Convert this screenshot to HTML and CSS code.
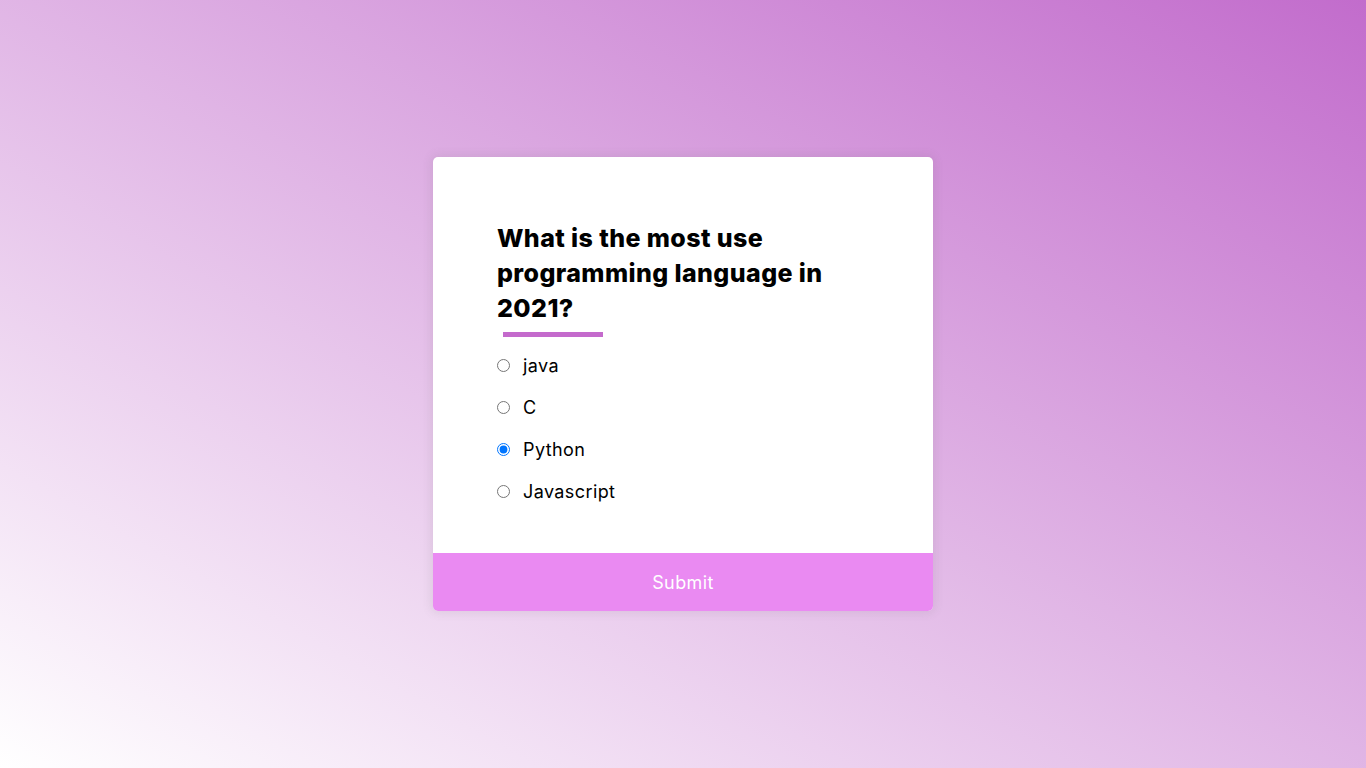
FILE: index.html
```html
<!DOCTYPE html>
<html lang="en">
<head>
<meta charset="UTF-8">
<title>Quiz</title>
<link rel="stylesheet" href="styles.css">
</head>
<body>
<main class="page">
  <div class="quiz-card">
    <div class="quiz-body">
      <h2 class="question">What is the most use programming language in 2021?</h2>
      <div class="question-bar"></div>
      <ul class="answers">
        <li class="answer"><input type="radio" name="answer" id="a" class="radio"><label for="a" class="answer-label">java</label></li>
        <li class="answer"><input type="radio" name="answer" id="b" class="radio"><label for="b" class="answer-label">C</label></li>
        <li class="answer"><input type="radio" name="answer" id="c" class="radio" checked><label for="c" class="answer-label">Python</label></li>
        <li class="answer"><input type="radio" name="answer" id="d" class="radio"><label for="d" class="answer-label">Javascript</label></li>
      </ul>
    </div>
    <button class="submit">Submit</button>
  </div>
</main>
</body>
</html>
```

FILE: styles.css
```css
* { box-sizing: border-box; }
html, body { height: 100%; }
body {
  margin: 0;
  font-family: Inter, "Open Sans", sans-serif;
  background: linear-gradient(to top right, #ffffff, #c26ccc);
  overflow: hidden;
}
.page {
  height: 100%;
  display: flex;
  justify-content: center;
  padding-top: 157px;
}
.quiz-card {
  width: 500px;
  height: 454px;
  background: #fff;
  border-radius: 5px;
  box-shadow: 0 0 10px 2px rgba(100, 100, 100, 0.12);
  overflow: hidden;
  display: flex;
  flex-direction: column;
}
.quiz-body {
  flex: 1;
  padding: 64px 64px 0 64px;
}
.question {
  margin: 0;
  font-size: 25px;
  font-weight: 800;
  line-height: 35px;
  color: #000;
  letter-spacing: 0.4px;
}
.question-bar {
  width: 100px;
  height: 5px;
  margin: 6px 0 7px 6px;
  background: #c46acc;
}
.answers {
  list-style: none;
  margin: 0;
  padding: 0;
}
.answer {
  height: 42px;
  display: flex;
  align-items: center;
}
.radio {
  width: 13px;
  height: 13px;
  margin: 0;
}
.answer-label {
  margin-left: 13px;
  font-size: 18px;
  letter-spacing: 0.4px;
  color: #000;
}
.submit {
  height: 58px;
  border: none;
  width: 100%;
  background: #ea8af2;
  color: #fff;
  font-family: inherit;
  font-size: 18px;
  letter-spacing: 0.4px;
  cursor: pointer;
}
```
